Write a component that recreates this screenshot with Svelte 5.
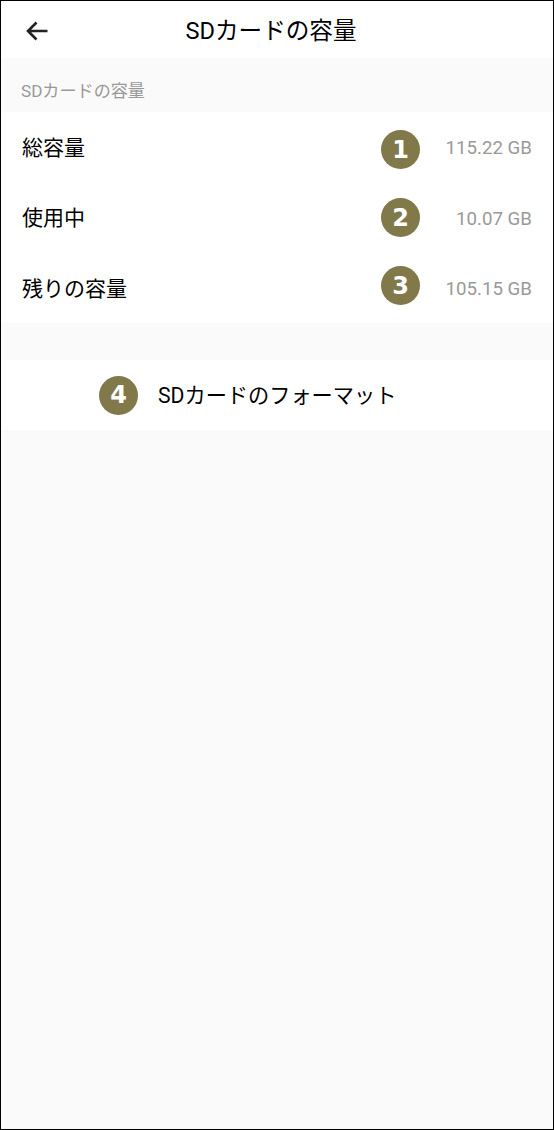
<script>
  const rows = [
    { label: '総容量', value: '115.22 GB', n: 1, top: 18 },
    { label: '使用中', value: '10.07 GB', n: 2, top: 15.5 },
    { label: '残りの容量', value: '105.15 GB', n: 3, top: 13 }
  ];
</script>

<div class="page">
  <header class="bar">
    <svg class="back" viewBox="0 0 24 24" width="24" height="24" aria-hidden="true">
      <path d="M22.5 12H3M11.5 3.5L3 12l8.5 8.5" fill="none" stroke="#222" stroke-width="2.6" />
    </svg>
    <h1>SDカードの容量</h1>
  </header>
  <div class="section">SDカードの容量</div>
  <div class="list">
    {#each rows as r}
      <div class="row">
        <span class="label">{r.label}</span>
        <span class="value">{r.value}</span>
        <span class="badge onrow" style="top:{r.top}px">{r.n}</span>
      </div>
    {/each}
  </div>
  <div class="format">
    <span class="badge inline">4</span>
    <span class="label">SDカードのフォーマット</span>
  </div>
</div>

<style>
  :global(body) {
    margin: 0;
    background: #fafafa;
  }
  .page {
    box-sizing: border-box;
    width: 554px;
    height: 1130px;
    border: 1px solid #000;
    background: #fafafa;
    font-family: Roboto, "Noto Sans CJK JP", sans-serif;
    color: #000;
  }
  .bar {
    height: 57px;
    background: #fff;
    display: flex;
    align-items: center;
    justify-content: center;
    position: relative;
  }
  .back {
    position: absolute;
    left: 24px;
    top: 18px;
  }
  h1 {
    margin: 2px 12px 0 0;
    font-size: 23.6px;
    font-weight: 400;
    line-height: 60px;
  }
  .section {
    height: 54px;
    box-sizing: border-box;
    padding-left: 20px;
    font-size: 17.1px;
    line-height: 66px;
    color: #999;
    overflow: hidden;
  }
  .list {
    background: #fff;
    height: 211px;
    display: flex;
    flex-direction: column;
  }
  .row {
    flex: none;
    height: 70.5px;
    display: flex;
    align-items: center;
    justify-content: space-between;
    padding: 0 21px;
    position: relative;
  }
  .label {
    font-size: 21px;
    line-height: 1;
    position: relative;
    top: 1px;
  }
  .format .label {
    font-size: 21.2px;
  }
  .value {
    font-size: 18.7px;
    color: #999;
    position: relative;
    top: 1px;
  }
  .badge {
    width: 39px;
    height: 39px;
    border-radius: 50%;
    background: #81794a;
    color: #fff;
    font-family: "DejaVu Sans", sans-serif;
    font-weight: 700;
    font-size: 24px;
    display: flex;
    align-items: center;
    justify-content: center;
  }
  .onrow {
    position: absolute;
    left: 380px;
  }
  .format {
    margin-top: 37px;
    height: 70px;
    background: #fff;
    display: flex;
    align-items: center;
    padding-left: 98px;
    gap: 20px;
  }
</style>
